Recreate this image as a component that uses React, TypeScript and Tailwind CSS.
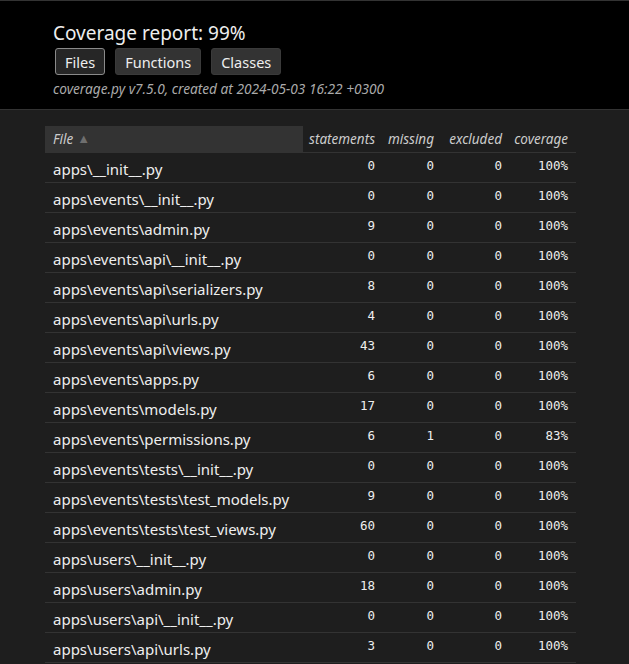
import React from "react";

type Row = {
  name: string;
  statements: number;
  missing: number;
  excluded: number;
  coverage: string;
};

const rows: Row[] = [
  { name: "apps\\__init__.py", statements: 0, missing: 0, excluded: 0, coverage: "100%" },
  { name: "apps\\events\\__init__.py", statements: 0, missing: 0, excluded: 0, coverage: "100%" },
  { name: "apps\\events\\admin.py", statements: 9, missing: 0, excluded: 0, coverage: "100%" },
  { name: "apps\\events\\api\\__init__.py", statements: 0, missing: 0, excluded: 0, coverage: "100%" },
  { name: "apps\\events\\api\\serializers.py", statements: 8, missing: 0, excluded: 0, coverage: "100%" },
  { name: "apps\\events\\api\\urls.py", statements: 4, missing: 0, excluded: 0, coverage: "100%" },
  { name: "apps\\events\\api\\views.py", statements: 43, missing: 0, excluded: 0, coverage: "100%" },
  { name: "apps\\events\\apps.py", statements: 6, missing: 0, excluded: 0, coverage: "100%" },
  { name: "apps\\events\\models.py", statements: 17, missing: 0, excluded: 0, coverage: "100%" },
  { name: "apps\\events\\permissions.py", statements: 6, missing: 1, excluded: 0, coverage: "83%" },
  { name: "apps\\events\\tests\\__init__.py", statements: 0, missing: 0, excluded: 0, coverage: "100%" },
  { name: "apps\\events\\tests\\test_models.py", statements: 9, missing: 0, excluded: 0, coverage: "100%" },
  { name: "apps\\events\\tests\\test_views.py", statements: 60, missing: 0, excluded: 0, coverage: "100%" },
  { name: "apps\\users\\__init__.py", statements: 0, missing: 0, excluded: 0, coverage: "100%" },
  { name: "apps\\users\\admin.py", statements: 18, missing: 0, excluded: 0, coverage: "100%" },
  { name: "apps\\users\\api\\__init__.py", statements: 0, missing: 0, excluded: 0, coverage: "100%" },
  { name: "apps\\users\\api\\urls.py", statements: 3, missing: 0, excluded: 0, coverage: "100%" },
];

const sans = "font-['Noto_Sans','Open_Sans',sans-serif]";
const mono = "font-['DejaVu_Sans_Mono','Liberation_Mono',monospace]";

export default function App() {
  return (
    <div className={`h-[664px] w-[629px] overflow-hidden bg-[#1e1e1e] text-[#eee] ${sans}`}>
      {/* Header */}
      <div className="border-t border-b border-[#333] bg-black pl-[53px] pt-[19px] h-[110px]">
        <h1 className="text-[19px] leading-[26px] text-[#eee]">Coverage report: 99%</h1>
        <div className="mt-[2px] ml-[2px] flex gap-[10px]">
          <button className="h-[27px] rounded-[3px] border border-[#8a8a8a] bg-[#262626] px-[9px] text-[14.5px] leading-[24px] text-[#eee]">
            Files
          </button>
          <button className="h-[27px] rounded-[3px] border border-[#3a3a3a] bg-[#333] px-[9px] text-[14.5px] leading-[24px] text-[#eee]">
            Functions
          </button>
          <button className="h-[27px] rounded-[3px] border border-[#3a3a3a] bg-[#333] px-[9px] text-[14.5px] leading-[24px] text-[#eee]">
            Classes
          </button>
        </div>
        <p className="mt-[5px] text-[13.7px] italic leading-[18px] text-[#aaa]">
          coverage.py v7.5.0, created at 2024-05-03 16:22 +0300
        </p>
      </div>

      {/* Table */}
      <div className="pl-[45px] pt-[16px]">
        <div className="w-[531px]">
          <div className="flex h-[27px] items-center border-b border-[#333] text-[13.5px] italic text-[#ccc]">
            <div className="flex h-full w-[258px] items-center gap-[4px] bg-[#333] pl-[8px]">
              File <span className="text-[13px] not-italic text-[#6f6f6f]">▲</span>
            </div>
            <div className="w-[80px] pr-[8px] text-right">statements</div>
            <div className="w-[59px] pr-[8px] text-right">missing</div>
            <div className="w-[68px] pr-[8px] text-right">excluded</div>
            <div className="w-[66px] pr-[8px] text-right">coverage</div>
          </div>
          {rows.map((r) => (
            <div key={r.name} className="flex h-[30px] border-b border-[#333]">
              <div className="w-[258px] pl-[8px] pt-[6px] text-[15px] leading-[20px]">{r.name}</div>
              <div className={`w-[80px] pr-[8px] pt-[5px] text-right text-[12.5px] leading-[16px] ${mono}`}>
                {r.statements}
              </div>
              <div className={`w-[59px] pr-[8px] pt-[5px] text-right text-[12.5px] leading-[16px] ${mono}`}>
                {r.missing}
              </div>
              <div className={`w-[68px] pr-[8px] pt-[5px] text-right text-[12.5px] leading-[16px] ${mono}`}>
                {r.excluded}
              </div>
              <div className={`w-[66px] pr-[8px] pt-[5px] text-right text-[12.5px] leading-[16px] ${mono}`}>
                {r.coverage}
              </div>
            </div>
          ))}
        </div>
      </div>
    </div>
  );
}
